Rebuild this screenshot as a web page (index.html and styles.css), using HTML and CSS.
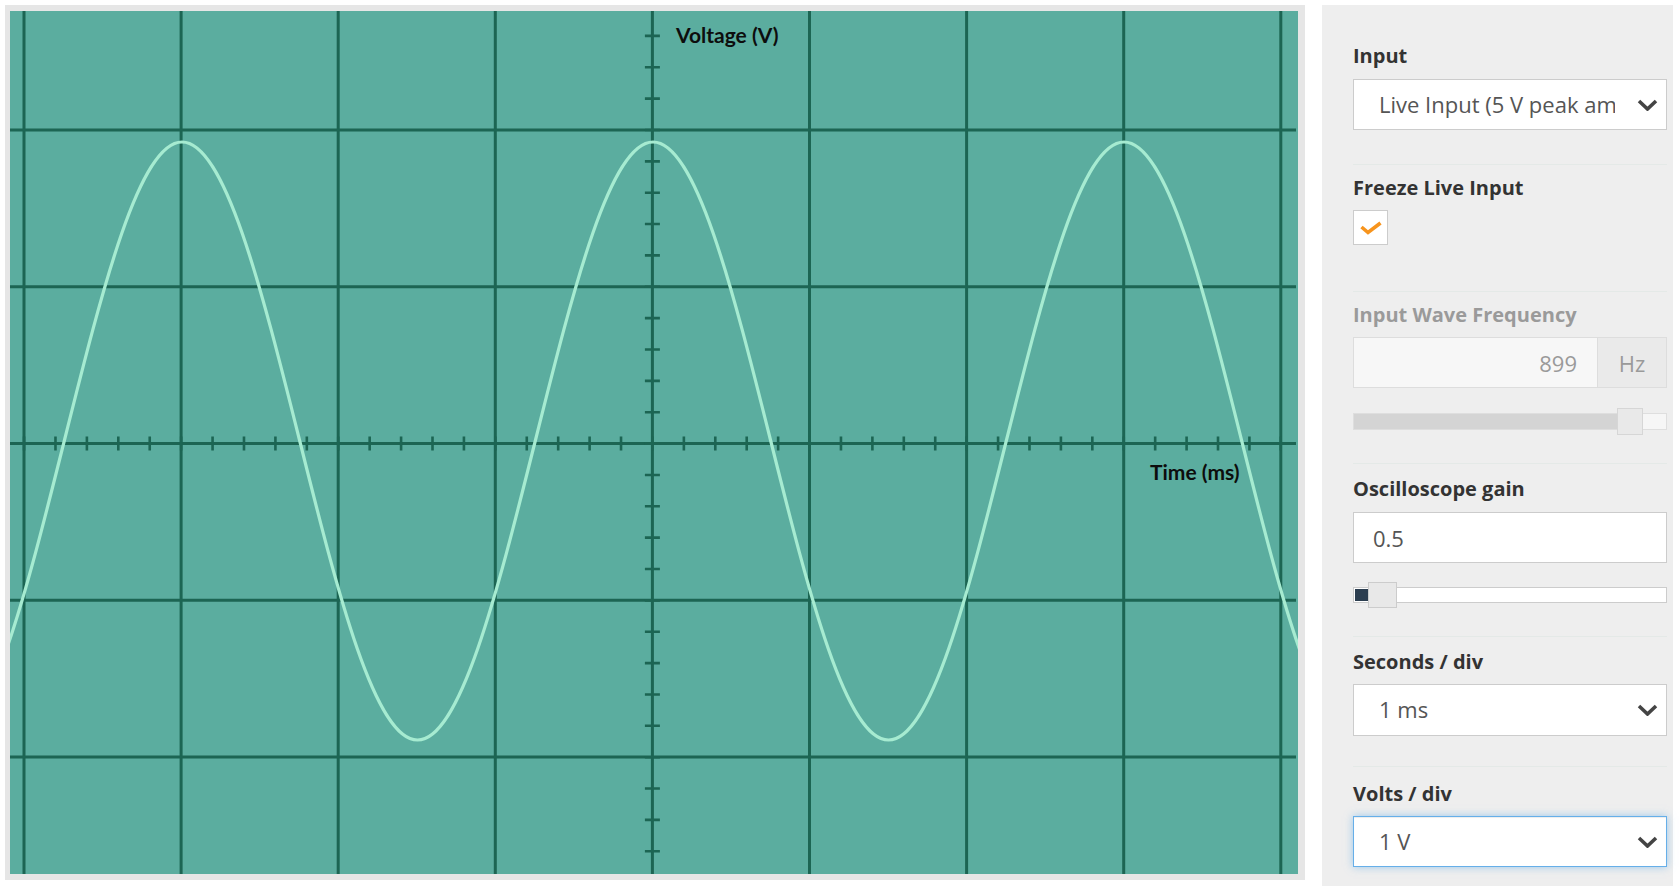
FILE: index.html
```html
<!DOCTYPE html>
<html lang="en">
<head>
<meta charset="utf-8">
<title>Oscilloscope</title>
<link rel="stylesheet" href="styles.css">
</head>
<body>
<main class="app">
  <div class="scope">
    <svg class="screen" width="1288" height="863" viewBox="10 11 1288 863" xmlns="http://www.w3.org/2000/svg">
      <rect x="10" y="11" width="1288" height="863" class="screen-bg"/>
      <g class="grid">
        <line x1="24" y1="11" x2="24" y2="874"/>
        <line x1="181.1" y1="11" x2="181.1" y2="874"/>
        <line x1="338.2" y1="11" x2="338.2" y2="874"/>
        <line x1="495.3" y1="11" x2="495.3" y2="874"/>
        <line x1="652.4" y1="11" x2="652.4" y2="874"/>
        <line x1="809.5" y1="11" x2="809.5" y2="874"/>
        <line x1="966.6" y1="11" x2="966.6" y2="874"/>
        <line x1="1123.7" y1="11" x2="1123.7" y2="874"/>
        <line x1="1280.8" y1="11" x2="1280.8" y2="874"/>
        <line x1="10" y1="129.9" x2="1296" y2="129.9"/>
        <line x1="10" y1="286.7" x2="1296" y2="286.7"/>
        <line x1="10" y1="443.5" x2="1296" y2="443.5"/>
        <line x1="10" y1="600.3" x2="1296" y2="600.3"/>
        <line x1="10" y1="757.1" x2="1296" y2="757.1"/>
      </g>
      <g class="ticks">
        <line x1="22.75" y1="443.5" x2="1282" y2="443.5" class="ticks-x"/>
        <line x1="652.4" y1="34.6" x2="652.4" y2="853" class="ticks-y"/>
      </g>
      <path class="wave" d="M-53.5 740
        c42.62 0 79.35 -145.8 117.75 -299 c38.4 -153.2 75.13 -299 117.75 -299 c42.62 0 79.35 145.8 117.75 299 c38.4 153.2 75.13 299 117.75 299
        c42.62 0 79.35 -145.8 117.75 -299 c38.4 -153.2 75.13 -299 117.75 -299 c42.62 0 79.35 145.8 117.75 299 c38.4 153.2 75.13 299 117.75 299
        c42.62 0 79.35 -145.8 117.75 -299 c38.4 -153.2 75.13 -299 117.75 -299 c42.62 0 79.35 145.8 117.75 299 c38.4 153.2 75.13 299 117.75 299"/>
      <text class="axis-label" x="676" y="43">Voltage (V)</text>
      <text class="axis-label" x="1150" y="480">Time (ms)</text>
    </svg>
  </div>

  <aside class="panel">
    <section class="group g-input">
      <label class="label" for="input-src">Input</label>
      <div class="select-wrap">
        <select id="input-src" class="select">
          <option>Live Input (5 V peak amplitude)</option>
        </select>
        <svg class="chevron" viewBox="0 0 21 12" width="21" height="12"><path d="M2 2 L10.5 10 L19 2"/></svg>
      </div>
    </section>

    <section class="group g-freeze">
      <div class="label">Freeze Live Input</div>
      <div class="checkbox">
        <svg viewBox="0 0 24 14" width="24" height="14"><path d="M2.5 6 L9 11.5 L21.5 2"/></svg>
      </div>
    </section>

    <section class="group g-freq">
      <div class="label label-disabled">Input Wave Frequency</div>
      <div class="input-group">
        <input class="input input-disabled" type="text" value="899" disabled>
        <span class="addon">Hz</span>
      </div>
      <div class="slider slider-disabled">
        <div class="track"><div class="fill" style="width: 264px"></div></div>
        <div class="handle" style="left: 264px"></div>
      </div>
    </section>

    <section class="group g-gain">
      <label class="label" for="gain">Oscilloscope gain</label>
      <input id="gain" class="input" type="text" value="0.5">
      <div class="slider slider-gain">
        <div class="track"><div class="fill" style="width: 13px"></div></div>
        <div class="handle" style="left: 15px"></div>
      </div>
    </section>

    <section class="group g-secs">
      <label class="label" for="secs">Seconds / div</label>
      <div class="select-wrap">
        <select id="secs" class="select">
          <option>1 ms</option>
        </select>
        <svg class="chevron" viewBox="0 0 21 12" width="21" height="12"><path d="M2 2 L10.5 10 L19 2"/></svg>
      </div>
    </section>

    <section class="group g-volts">
      <label class="label" for="volts">Volts / div</label>
      <div class="select-wrap">
        <select id="volts" class="select select-focus">
          <option>1 V</option>
        </select>
        <svg class="chevron" viewBox="0 0 21 12" width="21" height="12"><path d="M2 2 L10.5 10 L19 2"/></svg>
      </div>
    </section>
  </aside>
</main>
</body>
</html>
```

FILE: styles.css
```css
* { box-sizing: border-box; }

html, body {
  margin: 0;
  padding: 0;
  background: #ffffff;
  overflow: hidden;
}

.app {
  display: flex;
  align-items: flex-start;
  gap: 17px;
  padding: 5px 0 0 5px;
  width: 1680px;
  height: 886px;
}

/* ---------- oscilloscope ---------- */
.scope {
  flex: none;
  width: 1300px;
  height: 875px;
  padding: 6px 7px 6px 5px;
  background: #e6e6e6;
}

.screen { display: block; }

.screen-bg { fill: #5bad9f; }

.grid line {
  stroke: #1c6553;
  stroke-width: 3;
}

.ticks line { stroke: #1c6553; }
.ticks-x { stroke-width: 14; stroke-dasharray: 2.6 28.82; }
.ticks-y { stroke-width: 15; stroke-dasharray: 2.6 28.76; }

.wave {
  fill: none;
  stroke: #a6ebd1;
  stroke-width: 3.2;
  stroke-linejoin: round;
}

.axis-label {
  font-family: Lato, "Open Sans", sans-serif;
  font-weight: 700;
  font-size: 21px;
  fill: #0d0d0d;
}

/* ---------- control panel ---------- */
.panel {
  flex: none;
  width: 351px;
  height: 881px;
  background: #eeeeee;
  padding: 39px 6px 0 31px;
  font-family: "Open Sans", "Liberation Sans", sans-serif;
}

.group { display: flex; flex-direction: column; }
.group + .group { border-top: 1px solid #e4e9e7; }

.g-input  { padding-bottom: 34px; }
.g-freeze { padding-top: 11px; padding-bottom: 46px; }
.g-freq   { padding-top: 11px; padding-bottom: 28px; }
.g-gain   { padding-top: 13px; padding-bottom: 28px; }
.g-secs   { padding-top: 13px; padding-bottom: 30px; }
.g-volts  { padding-top: 15px; }

.label {
  display: block;
  font-size: 20px;
  line-height: 23px;
  font-weight: 700;
  color: #333333;
  margin-bottom: 12px;
}
.g-freeze .label { margin-bottom: 11px; }
.g-freq .label   { margin-bottom: 11px; }
.g-gain .label   { margin-bottom: 12px; }
.g-secs .label   { margin-bottom: 11px; }
.g-volts .label  { margin-bottom: 11px; }

.label-disabled { color: #9a9a9a; }

/* select */
.select-wrap { position: relative; }

.select {
  display: block;
  width: 100%;
  height: 51px;
  margin: 0;
  padding: 0 51px 2px 25px;
  border: 1px solid #cccccc;
  border-radius: 0;
  background: #ffffff;
  font-family: "Open Sans", "Liberation Sans", sans-serif;
  font-size: 22px;
  color: #555555;
  appearance: none;
  -webkit-appearance: none;
  outline: none;
}
.g-secs .select { height: 52px; }

.select-focus {
  border-color: #66afe9;
  box-shadow: inset 0 1px 1px rgba(0, 0, 0, 0.075), 0 0 8px rgba(102, 175, 233, 0.6);
}

.chevron {
  position: absolute;
  right: 9px;
  top: 50%;
  margin-top: -6px;
  pointer-events: none;
}
.chevron path {
  fill: none;
  stroke: #444444;
  stroke-width: 3.6;
}

/* checkbox */
.checkbox {
  width: 35px;
  height: 35px;
  background: #ffffff;
  border: 1px solid #cccccc;
  display: flex;
  align-items: center;
  justify-content: center;
}
.checkbox svg path {
  fill: none;
  stroke: #f7941d;
  stroke-width: 3.6;
}

/* text inputs */
.input {
  display: block;
  width: 100%;
  height: 51px;
  margin: 0;
  padding: 0 19px;
  border: 1px solid #cccccc;
  border-radius: 0;
  background: #ffffff;
  font-family: "Open Sans", "Liberation Sans", sans-serif;
  font-size: 22px;
  color: #555555;
  outline: none;
}

.input-group {
  display: flex;
  height: 51px;
}
.input-group .input {
  flex: 1;
  width: auto;
  min-width: 0;
}
.input-disabled {
  background: #f7f7f7;
  border-color: #dddddd;
  color: #9a9a9a;
  text-align: right;
  padding-right: 20px;
  -webkit-text-fill-color: #9a9a9a;
  opacity: 1;
}
.addon {
  flex: none;
  width: 69px;
  display: flex;
  align-items: center;
  justify-content: center;
  background: #eaeaea;
  border: 1px solid #dddddd;
  border-left: none;
  font-size: 22px;
  color: #9a9a9a;
}

/* sliders */
.slider {
  position: relative;
  height: 27px;
  margin-top: 20px;
  display: flex;
  align-items: center;
}
.slider .track {
  position: relative;
  width: 100%;
  height: 17px;
}
.slider .fill { height: 100%; }
.slider .handle {
  position: absolute;
  top: 0;
  height: 27px;
}

.slider-disabled .track {
  background: #f6f6f6;
  border: 1px solid #dedede;
}
.slider-disabled .fill { background: #d4d4d4; }
.slider-disabled .handle {
  width: 26px;
  background: #e9e9e9;
  border: 1px solid #d6d6d6;
}

.slider-gain { margin-top: 19px; height: 26px; }
.slider-gain .track {
  height: 16px;
  background: #ffffff;
  border: 1px solid #cccccc;
  padding: 1px;
}
.slider-gain .fill { background: #2c3e50; }
.slider-gain .handle {
  width: 29px;
  height: 26px;
  background: #e8e8e8;
  border: 1px solid #cccccc;
}
```
